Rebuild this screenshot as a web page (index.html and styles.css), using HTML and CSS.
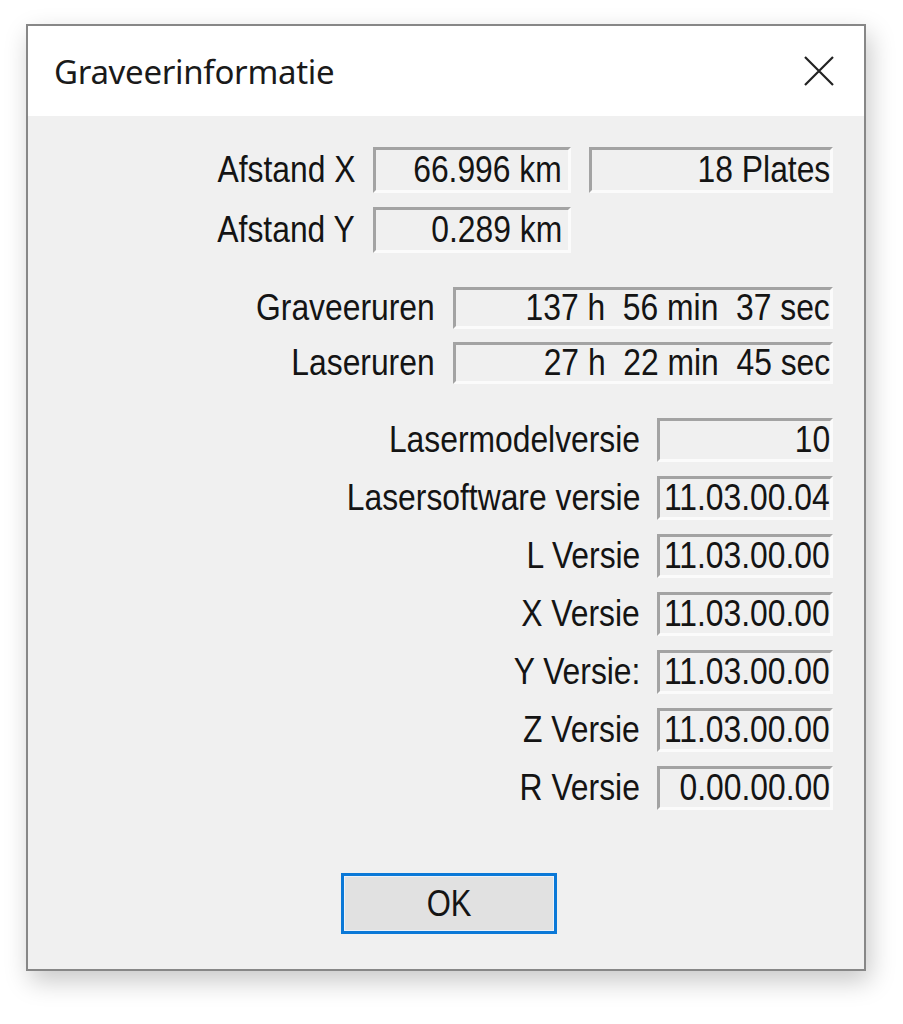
FILE: index.html
```html
<!DOCTYPE html>
<html>
<head>
<meta charset="utf-8">
<link rel="stylesheet" href="styles.css">
</head>
<body>
<div class="dialog">
  <div class="titlebar">
    <span class="title">Graveerinformatie</span>
    <svg class="close" width="32" height="32" viewBox="0 0 32 32"><path d="M2 2 L30 30 M30 2 L2 30" stroke="#222" stroke-width="2.2" fill="none"/></svg>
  </div>
  <div class="content">
    <div class="grid g1">
      <span class="label"><span class="t">Afstand X</span></span><span class="field"><span class="t">66.996 km</span></span><span class="field tight"><span class="t">18 Plates</span></span>
      <span class="label"><span class="t">Afstand Y</span></span><span class="field"><span class="t">0.289 km</span></span><span></span>
    </div>
    <div class="grid g2">
      <span class="label"><span class="t">Graveeruren</span></span><span class="field tight"><span class="t">137 h&nbsp; 56 min&nbsp; 37 sec</span></span>
      <span class="label"><span class="t">Laseruren</span></span><span class="field tight"><span class="t">27 h&nbsp; 22 min&nbsp; 45 sec</span></span>
    </div>
    <div class="grid g3">
      <span class="label"><span class="t">Lasermodelversie</span></span><span class="field tight"><span class="t">10</span></span>
      <span class="label"><span class="t">Lasersoftware versie</span></span><span class="field tight"><span class="t">11.03.00.04</span></span>
      <span class="label"><span class="t">L Versie</span></span><span class="field tight"><span class="t">11.03.00.00</span></span>
      <span class="label"><span class="t">X Versie</span></span><span class="field tight"><span class="t">11.03.00.00</span></span>
      <span class="label"><span class="t">Y Versie:</span></span><span class="field tight"><span class="t">11.03.00.00</span></span>
      <span class="label"><span class="t">Z Versie</span></span><span class="field tight"><span class="t">11.03.00.00</span></span>
      <span class="label"><span class="t">R Versie</span></span><span class="field tight"><span class="t">0.00.00.00</span></span>
    </div>
    <div class="actions">
      <button class="ok"><span class="t">OK</span></button>
    </div>
  </div>
</div>
</body>
</html>
```
FILE: styles.css
```css
html, body {
  margin: 0;
  padding: 0;
  background: #ffffff;
}
body {
  width: 903px;
  height: 1024px;
  overflow: hidden;
}
.dialog {
  box-sizing: border-box;
  width: 840px;
  margin: 24px 0 0 26px;
  border: 2px solid #878787;
  background: #f0f0f0;
  box-shadow: 4px 10px 24px rgba(0, 0, 0, 0.22);
}
.titlebar {
  height: 90px;
  background: #ffffff;
  display: flex;
  align-items: center;
  justify-content: space-between;
  padding: 0 29px 0 26px;
}
.title {
  font-family: "Noto Sans", "Open Sans", sans-serif;
  font-size: 33px;
  color: #1a1a1a;
  letter-spacing: -0.3px;
}
.close {
  display: block;
}
.content {
  padding: 31px 31px 35px 0;
  font-family: "Liberation Sans", Arial, sans-serif;
  font-size: 37px;
  color: #141414;
}
.t {
  display: inline-block;
  white-space: nowrap;
  transform: scaleX(0.86);
  transform-origin: right center;
}
.grid {
  display: grid;
  align-items: center;
}
.g1 {
  grid-template-columns: 327px 198px 244px;
  column-gap: 18px;
  row-gap: 14px;
  grid-auto-rows: 46px;
}
.g2 {
  margin-top: 34px;
  grid-template-columns: 407px 380px;
  column-gap: 18px;
  row-gap: 13px;
  grid-auto-rows: 42px;
}
.g3 {
  margin-top: 34px;
  grid-template-columns: 612px 176px;
  column-gap: 17px;
  row-gap: 14px;
  grid-auto-rows: 44px;
}
.label {
  text-align: right;
  white-space: nowrap;
}
.field {
  box-sizing: border-box;
  height: 100%;
  border-style: solid;
  border-width: 3px;
  border-color: #a3a3a3 #fbfbfb #fbfbfb #a3a3a3;
  background: #f0f0f0;
  display: flex;
  align-items: center;
  justify-content: flex-end;
  padding-right: 6px;
  white-space: nowrap;
  overflow: hidden;
}
.field.tight {
  padding-right: 0;
}
.actions {
  margin-top: 63px;
  display: flex;
  justify-content: center;
  padding-left: 37px;
}
.ok {
  box-sizing: border-box;
  width: 216px;
  height: 61px;
  border: 3px solid #0a78d7;
  box-shadow: inset 0 0 0 1px #e9f1fa;
  background: #e1e1e1;
  font-family: "Liberation Sans", Arial, sans-serif;
  font-size: 36px;
  color: #141414;
  padding: 0;
}
.ok .t {
  transform-origin: center center;
}
```
